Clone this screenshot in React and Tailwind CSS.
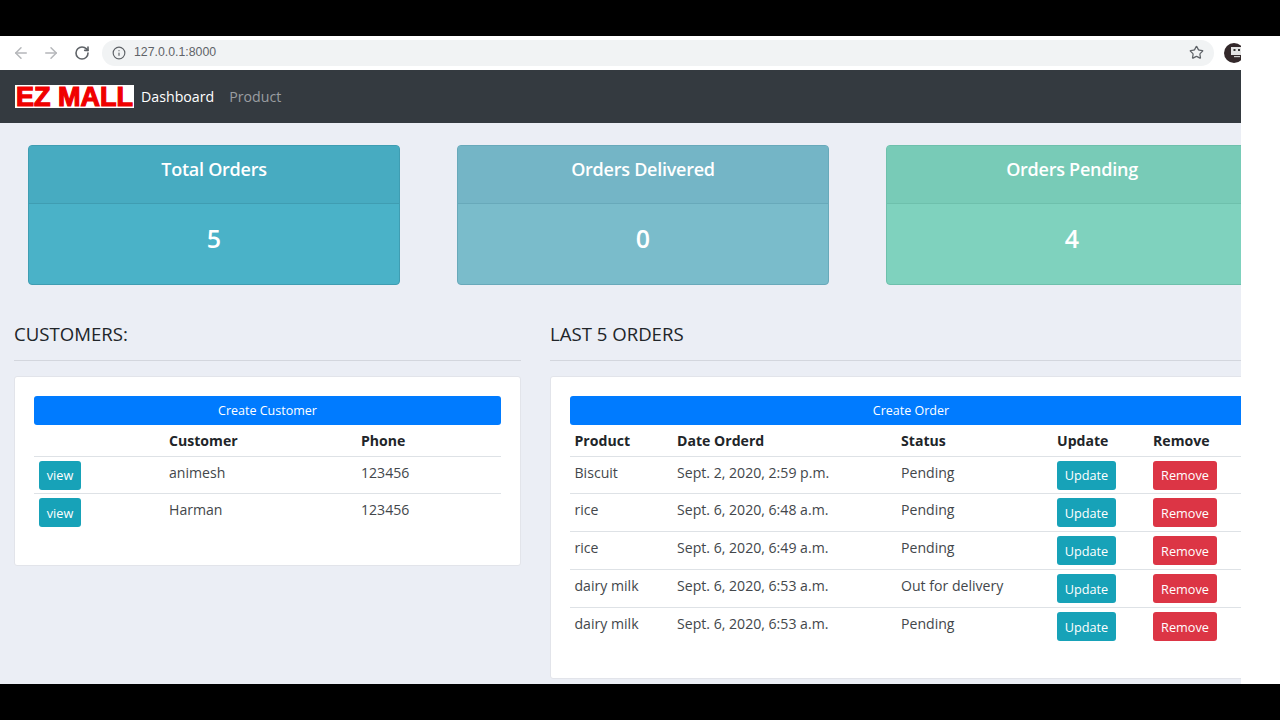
import React from "react";
import { ArrowLeft, ArrowRight, RotateCw, Info, Star } from "lucide-react";

const orders = [
  ["Biscuit", "Sept. 2, 2020, 2:59 p.m.", "Pending"],
  ["rice", "Sept. 6, 2020, 6:48 a.m.", "Pending"],
  ["rice", "Sept. 6, 2020, 6:49 a.m.", "Pending"],
  ["dairy milk", "Sept. 6, 2020, 6:53 a.m.", "Out for delivery"],
  ["dairy milk", "Sept. 6, 2020, 6:53 a.m.", "Pending"],
];

function Stat({ title, value, head, body, border }) {
  return (
    <div className={`w-[372px] h-[140px] shrink-0 rounded-[4px] border text-white overflow-hidden ${body} ${border}`}>
      <div className={`h-[58px] flex items-center justify-center border-b text-[18px] tracking-[-0.25px] font-semibold pb-[10px] ${head} ${border}`}>{title}</div>
      <div className="h-[80px] flex items-center justify-center text-[25px] font-semibold pb-[10px]">{value}</div>
    </div>
  );
}

function Btn({ children, color, w }) {
  return (
    <button className={`h-[29px] pt-[2px] rounded-[3px] text-white text-[12.7px] ${color} ${w}`}>{children}</button>
  );
}

export default function App() {
  return (
    <div className="h-[720px] w-[1280px] flex flex-col bg-black overflow-hidden font-['Open_Sans',sans-serif] text-[#212529]">
      <div className="h-[36px] shrink-0 bg-black" />
      <div className="flex-1 flex min-h-0">
        <div className="w-[1241px] shrink-0 overflow-hidden flex flex-col bg-[#ebeef5]">
          {/* browser bar */}
          <div className="h-[34px] shrink-0 bg-white flex items-center pl-[12px] pb-[1px]">
            <ArrowLeft size={18} className="text-[#b5b7ba] shrink-0" strokeWidth={2} />
            <ArrowRight size={18} className="text-[#b5b7ba] ml-[12px] shrink-0" strokeWidth={2} />
            <RotateCw size={16} className="text-[#5f6368] ml-[14px] shrink-0" strokeWidth={2.4} />
            <div className="ml-[12px] w-[1112px] shrink-0 h-[26px] rounded-full bg-[#f1f3f4] flex items-center pl-[10px] pr-[10px]">
              <Info size={14} className="text-[#5f6368]" />
              <span className="ml-[8px] text-[12.3px] text-[#5f6368] font-['Liberation_Sans',sans-serif]">127.0.0.1:8000</span>
              <Star size={15} className="text-[#5f6368] ml-auto" />
            </div>
            <div className="ml-[10px] w-[20px] h-[20px] shrink-0 rounded-full bg-[#33282a] flex items-center justify-end">
              <svg width="13" height="11" viewBox="0 0 13 11" className="shrink-0">
                <rect x="0" y="0" width="12" height="8" fill="#e4e4e4" />
                <rect x="2.5" y="2" width="2" height="2" fill="#333" />
                <rect x="7" y="2" width="2" height="2" fill="#333" />
                <rect x="3" y="9" width="6" height="1.2" fill="#ccc" />
              </svg>
            </div>
          </div>
          {/* navbar */}
          <nav className="h-[53px] shrink-0 bg-[#343a40] flex items-center pl-[15px] text-[14.2px]">
            <div className="w-[119px] h-[23px] shrink-0 bg-white flex items-start justify-center">
              <span className="text-[#f00000] text-[27px] leading-[25px] font-bold whitespace-nowrap font-['Liberation_Sans',sans-serif] [-webkit-text-stroke:1.2px_#f00000]">EZ MALL</span>
            </div>
            <a className="ml-[7px] text-white">Dashboard</a>
            <a className="ml-[15px] text-[#9a9da0]">Product</a>
          </nav>
          {/* stats */}
          <div className="flex gap-[57px] pl-[28px] pt-[22px] shrink-0">
            <Stat title="Total Orders" value="5" head="bg-[#47abc1]" body="bg-[#4ab2c8]" border="border-[#3f9db2]" />
            <Stat title="Orders Delivered" value="0" head="bg-[#74b5c6]" body="bg-[#7abccb]" border="border-[#68a9ba]" />
            <Stat title="Orders Pending" value="4" head="bg-[#78cbb7]" body="bg-[#7fd2be]" border="border-[#6ec0ac]" />
          </div>
          {/* lower */}
          <div className="flex pl-[14px] gap-[29px] pt-[37px] flex-1 min-h-0">
            <section className="w-[507px] shrink-0">
              <h5 className="text-[18.6px] leading-[24px] font-medium text-[#212529]">CUSTOMERS:</h5>
              <hr className="mt-[14px] border-t border-[#d3d6dd]" />
              <div className="mt-[15px] h-[190px] bg-white rounded-[3px] border border-[#e2e4ea] pt-[19px] px-[19px]">
                <button className="w-full h-[29px] pt-[2px] rounded-[3px] bg-[#007bff] text-white text-[12.5px]">Create Customer</button>
                <table className="w-full table-fixed border-collapse text-[14.1px]">
                  <thead>
                    <tr className="h-[31px] border-b border-[#dee2e6]">
                      <th className="w-[130px]" />
                      <th className="text-left font-bold pl-[5px] w-[192px]">Customer</th>
                      <th className="text-left font-bold pl-[5px]">Phone</th>
                    </tr>
                  </thead>
                  <tbody>
                    {["animesh", "Harman"].map((n) => (
                      <tr key={n} className="h-[37.8px] border-b border-[#dee2e6] last:border-0 align-top text-[#43474b]">
                        <td className="pl-[5px] pt-[4px]"><Btn color="bg-[#17a2b8]" w="w-[42px]">view</Btn></td>
                        <td className="pl-[5px] pt-[5px]">{n}</td>
                        <td className="pl-[5px] pt-[5px]">123456</td>
                      </tr>
                    ))}
                  </tbody>
                </table>
              </div>
            </section>
            <section className="w-[724px] shrink-0">
              <h5 className="text-[18.6px] leading-[24px] font-medium text-[#212529]">LAST 5 ORDERS</h5>
              <hr className="mt-[14px] border-t border-[#d3d6dd]" />
              <div className="mt-[15px] h-[303px] bg-white rounded-[3px] border border-[#e2e4ea] pt-[19px] px-[19px]">
                <button className="w-[682px] h-[29px] pt-[2px] rounded-[3px] bg-[#007bff] text-white text-[12.5px]">Create Order</button>
                <table className="w-[682px] table-fixed border-collapse text-[14.1px]">
                  <thead>
                    <tr className="h-[31px] border-b border-[#dee2e6] text-left">
                      <th className="font-bold pl-[4.5px] w-[102px]">Product</th>
                      <th className="font-bold pl-[5px] w-[224px]">Date Orderd</th>
                      <th className="font-bold pl-[5px] w-[156px]">Status</th>
                      <th className="font-bold pl-[5px] w-[96px]">Update</th>
                      <th className="font-bold pl-[5px]">Remove</th>
                    </tr>
                  </thead>
                  <tbody>
                    {orders.map((o, i) => (
                      <tr key={i} className="h-[37.8px] border-b border-[#dee2e6] last:border-0 align-top text-[#43474b]">
                        <td className="pl-[4.5px] pt-[5px]">{o[0]}</td>
                        <td className="pl-[5px] pt-[5px]">{o[1]}</td>
                        <td className="pl-[5px] pt-[5px]">{o[2]}</td>
                        <td className="pl-[5px] pt-[4px]"><Btn color="bg-[#17a2b8]" w="w-[59px]">Update</Btn></td>
                        <td className="pl-[5px] pt-[4px]"><Btn color="bg-[#dc3545]" w="w-[64px]">Remove</Btn></td>
                      </tr>
                    ))}
                  </tbody>
                </table>
              </div>
            </section>
          </div>
        </div>
        <div className="flex-1 bg-white" />
      </div>
      <div className="h-[36px] shrink-0 bg-black" />
    </div>
  );
}
